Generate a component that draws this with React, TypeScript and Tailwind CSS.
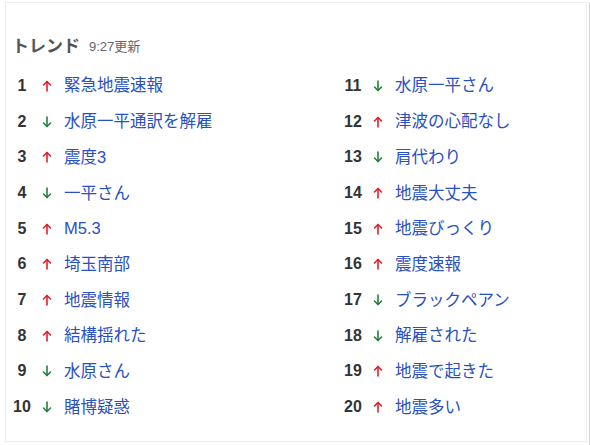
import React from 'react';

type Trend = { word: string; dir: 'up' | 'down' };

const TRENDS: Trend[] = [
  { word: '緊急地震速報', dir: 'up' },
  { word: '水原一平通訳を解雇', dir: 'down' },
  { word: '震度3', dir: 'up' },
  { word: '一平さん', dir: 'down' },
  { word: 'M5.3', dir: 'up' },
  { word: '埼玉南部', dir: 'up' },
  { word: '地震情報', dir: 'up' },
  { word: '結構揺れた', dir: 'up' },
  { word: '水原さん', dir: 'down' },
  { word: '賭博疑惑', dir: 'down' },
  { word: '水原一平さん', dir: 'down' },
  { word: '津波の心配なし', dir: 'up' },
  { word: '肩代わり', dir: 'down' },
  { word: '地震大丈夫', dir: 'up' },
  { word: '地震びっくり', dir: 'up' },
  { word: '震度速報', dir: 'up' },
  { word: 'ブラックペアン', dir: 'down' },
  { word: '解雇された', dir: 'down' },
  { word: '地震で起きた', dir: 'up' },
  { word: '地震多い', dir: 'up' },
];

const FONT = "font-['Liberation_Sans','Noto_Sans_CJK_JP',sans-serif]";

function Arrow({ dir }: { dir: 'up' | 'down' }) {
  const color = dir === 'up' ? '#e0202a' : '#23803a';
  return (
    <svg width="10" height="12" viewBox="0 0 10 12" fill="none" stroke={color} strokeWidth="1.6" strokeLinecap="round" strokeLinejoin="round">
      {dir === 'up' ? (
        <>
          <path d="M5 1.5V11" />
          <path d="M1.5 5L5 1.5L8.5 5" />
        </>
      ) : (
        <>
          <path d="M5 1V10.5" />
          <path d="M1.5 7L5 10.5L8.5 7" />
        </>
      )}
    </svg>
  );
}

function TrendRow({ rank, trend }: { rank: number; trend: Trend }) {
  return (
    <li className="flex h-[35.7px] items-center">
      <span className="w-[20px] text-center text-[16px] font-bold text-[#333]">{rank}</span>
      <span className="ml-[10px] flex w-[10px] justify-center">
        <Arrow dir={trend.dir} />
      </span>
      <a className="ml-[12px] text-[16.5px] text-[#2950c2]">{trend.word}</a>
    </li>
  );
}

export default function App() {
  const left = TRENDS.slice(0, 10);
  const right = TRENDS.slice(10);

  return (
    <div className={`h-[444px] w-[590px] border-r border-b border-[#d4d4d4] bg-white ${FONT}`}>
      <div className="ml-[5px] mt-[2px] h-[440px] w-[582px] border border-[#eeeeee]">
        <div className="ml-[6px] mt-[32px] flex h-[24px] items-center gap-[9px]">
          <h2 className="text-[17px] font-bold text-[#555]">トレンド</h2>
          <span className="text-[13px] text-[#666]">9:27更新</span>
        </div>
        <div className="ml-[6px] mt-[9px] flex">
          <ol className="w-[331px]">
            {left.map((t, i) => (
              <TrendRow key={t.word} rank={i + 1} trend={t} />
            ))}
          </ol>
          <ol>
            {right.map((t, i) => (
              <TrendRow key={t.word} rank={i + 11} trend={t} />
            ))}
          </ol>
        </div>
      </div>
    </div>
  );
}
